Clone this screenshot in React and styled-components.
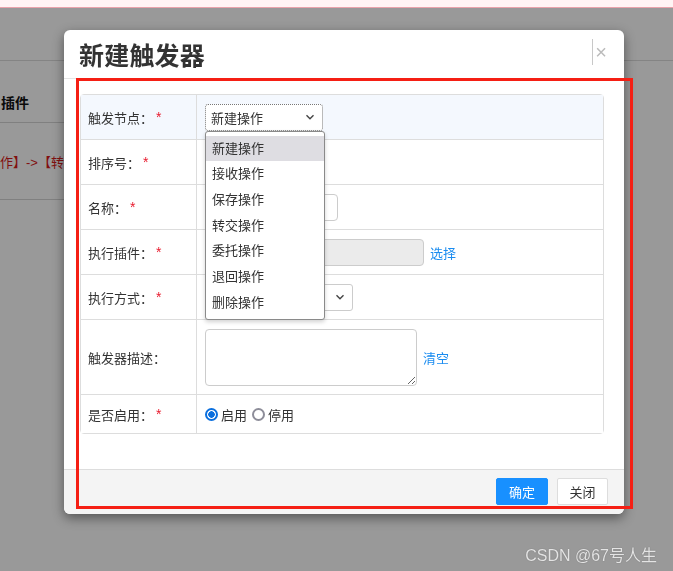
import styled, { createGlobalStyle } from "styled-components"

const GlobalStyle = createGlobalStyle`
  html, body {
    margin: 0;
    padding: 0;
    background: #fff;
    font-family: "Liberation Sans", "Noto Sans CJK SC", sans-serif;
    overflow: hidden;
  }
`

const nodeOptions = ["新建操作", "接收操作", "保存操作", "转交操作", "委托操作", "退回操作", "删除操作"]

function Chevron() {
  return (
    <svg width="10" height="10" viewBox="0 0 10 10">
      <path d="M1.5 3.2 L5 6.7 L8.5 3.2" fill="none" stroke="#444" strokeWidth="1.4" />
    </svg>
  )
}

export default function App() {
  return (
    <>
      <GlobalStyle />
      <Page>
        <TopStrip />
        <BgToolbar />
        <BgTable>
          <BgRow h={62} pb={10}>
            <BgClip>
              <BgCell shift={1} bold>插件</BgCell>
            </BgClip>
          </BgRow>
          <BgRow h={77}>
            <BgClip>
              <BgCell shift={0} red>作】-&gt;【转</BgCell>
            </BgClip>
          </BgRow>
        </BgTable>
      </Page>

      <Overlay />

      <Modal>
        <ModalHeader>
          <Title>新建触发器</Title>
          <CloseButton>×</CloseButton>
        </ModalHeader>

        <ModalBody>
          <FormTable>
            <Row h={44} active>
              <Label>触发节点：<Req>*</Req></Label>
              <Field>
                <SelectBox w={118} focused>
                  <span>新建操作</span>
                  <Chevron />
                  <Dropdown>
                    {nodeOptions.map((o, i) => (
                      <Option key={o} selected={i === 0}>{o}</Option>
                    ))}
                  </Dropdown>
                </SelectBox>
              </Field>
            </Row>
            <Row h={44}>
              <Label>排序号：<Req>*</Req></Label>
              <Field>
                <Input w={100} />
              </Field>
            </Row>
            <Row h={44}>
              <Label>名称：<Req>*</Req></Label>
              <Field>
                <Input w={133} />
              </Field>
            </Row>
            <Row h={44}>
              <Label>执行插件：<Req>*</Req></Label>
              <Field>
                <Input w={219} disabled />
                <Link>选择</Link>
              </Field>
            </Row>
            <Row h={44}>
              <Label>执行方式：<Req>*</Req></Label>
              <Field>
                <SelectBox w={148}>
                  <span></span>
                  <Chevron />
                </SelectBox>
              </Field>
            </Row>
            <Row h={74}>
              <Label>触发器描述：</Label>
              <Field>
                <TextArea />
                <Link>清空</Link>
              </Field>
            </Row>
            <Row h={38} last>
              <Label>是否启用：<Req>*</Req></Label>
              <Field>
                <RadioGroup>
                  <Radio checked />
                  <RadioText>启用</RadioText>
                  <Radio />
                  <RadioText>停用</RadioText>
                </RadioGroup>
              </Field>
            </Row>
          </FormTable>
        </ModalBody>

        <ModalFooter>
          <Button primary>确定</Button>
          <Button>关闭</Button>
        </ModalFooter>
      </Modal>

      <Annotation />
      <Watermark>CSDN @67号人生</Watermark>
    </>
  )
}

const Page = styled.div`
  width: 673px;
  height: 571px;
  background: #fff;
  overflow: hidden;
`
const TopStrip = styled.div`
  height: 7px;
  background: #fff4f4;
  border-bottom: 1px solid #e9a3ab;
  position: relative;
  z-index: 2;
`
const BgToolbar = styled.div`
  height: 52px;
  border-bottom: 1px solid #dcdcdc;
`
const BgTable = styled.div`
  width: 600px;
`
const BgRow = styled.div`
  height: ${(p) => p.h}px;
  box-sizing: border-box;
  padding-bottom: ${(p) => p.pb || 0}px;
  border-bottom: 1px solid #d6d6d6;
  display: flex;
  align-items: ${(p) => (p.pb ? "flex-end" : "center")};
`
const BgClip = styled.div`
  width: 64px;
  overflow: hidden;
`
const BgCell = styled.div`
  margin-left: ${(p) => p.shift}px;
  white-space: nowrap;
  font-size: ${(p) => (p.bold ? 14 : 13)}px;
  font-weight: ${(p) => (p.bold ? 700 : 400)};
  color: ${(p) => (p.red ? "#d81b1b" : "#111")};
`
const Overlay = styled.div`
  position: fixed;
  left: 0;
  right: 0;
  top: 8px;
  bottom: 0;
  background: rgba(0, 0, 0, 0.4);
`
const Modal = styled.div`
  position: absolute;
  left: 64px;
  top: 30px;
  width: 560px;
  height: 484px;
  background: #fff;
  border-radius: 6px;
  box-shadow: 0 4px 12px rgba(0, 0, 0, 0.45);
  display: flex;
  flex-direction: column;
`
const ModalHeader = styled.div`
  height: 49px;
  box-sizing: border-box;
  border-bottom: 1px solid #e5e5e5;
  padding: 0 17px 0 15px;
  display: flex;
  align-items: center;
  justify-content: space-between;
`
const Title = styled.h3`
  margin: 0;
  font-size: 25px;
  font-weight: 700;
  color: #333;
  letter-spacing: 0.2px;
`
const CloseButton = styled.span`
  border-left: 1px solid #c8c8c8;
  height: 26px;
  padding-left: 2px;
  margin-top: -4px;
  font-size: 20px;
  line-height: 26px;
  color: #bbb;
`
const ModalBody = styled.div`
  flex: 1;
  padding: 15px 20px 0 16px;
`
const FormTable = styled.div`
  border: 1px solid #ddd;
  border-radius: 4px;
`
const Row = styled.div`
  display: grid;
  grid-template-columns: 116px 1fr;
  height: ${(p) => p.h + (p.last ? 0 : 1)}px;
  box-sizing: border-box;
  border-bottom: ${(p) => (p.last ? "none" : "1px solid #ddd")};
  background: ${(p) => (p.active ? "#f4f8fe" : "#fff")};
`
const Label = styled.div`
  border-right: 1px solid #ddd;
  padding-left: 7px;
  display: flex;
  align-items: center;
  font-size: 13px;
  color: #333;
`
const Req = styled.span`
  color: #e8192c;
  margin-left: 3px;
  font-size: 14px;
`
const Field = styled.div`
  padding-left: 8px;
  display: flex;
  align-items: center;
`
const SelectBox = styled.div`
  position: relative;
  width: ${(p) => p.w}px;
  height: 27px;
  box-sizing: border-box;
  border: 1px ${(p) => (p.focused ? "dotted #777" : "solid #ccc")};
  border-radius: 3px;
  background: #fff;
  padding: 0 7px 0 5px;
  display: flex;
  align-items: center;
  justify-content: space-between;
  font-size: 13px;
  color: #333;
`
const Dropdown = styled.div`
  position: absolute;
  top: 26px;
  left: -1px;
  width: 120px;
  box-sizing: border-box;
  border: 1px solid #8a8a8a;
  border-radius: 3px;
  background: #fff;
  padding: 4px 0;
  box-shadow: 0 2px 4px rgba(0, 0, 0, 0.18);
  z-index: 5;
`
const Option = styled.div`
  height: 25.7px;
  line-height: 25.7px;
  padding-left: 6px;
  font-size: 13px;
  color: #333;
  background: ${(p) => (p.selected ? "#dedde2" : "transparent")};
`
const Input = styled.input`
  width: ${(p) => p.w}px;
  height: 27px;
  box-sizing: border-box;
  border: 1px solid #ccc;
  border-radius: 4px;
  background: ${(p) => (p.disabled ? "#ebebeb" : "#fff")};
  outline: none;
`
const TextArea = styled.textarea`
  width: 212px;
  height: 57px;
  box-sizing: border-box;
  border: 1px solid #ccc;
  border-radius: 4px;
  margin: 0;
  outline: none;
`
const Link = styled.a`
  margin-left: 6px;
  font-size: 13px;
  color: #1a8cf0;
  cursor: pointer;
`
const RadioGroup = styled.div`
  display: flex;
  align-items: center;
  font-size: 13px;
  color: #333;
`
const Radio = styled.span`
  width: 13px;
  height: 13px;
  box-sizing: border-box;
  border-radius: 50%;
  border: 2px solid ${(p) => (p.checked ? "#0b6fde" : "#8d8d99")};
  background: ${(p) => (p.checked ? "radial-gradient(circle, #0b6fde 0 3px, #fff 3.5px)" : "#fff")};
`
const RadioText = styled.span`
  margin: 0 5px 0 3px;
`
const ModalFooter = styled.div`
  height: 45px;
  box-sizing: border-box;
  border-top: 1px solid #ddd;
  background: #f4f4f4;
  border-radius: 0 0 6px 6px;
  padding: 8px 16px 0 0;
  display: flex;
  justify-content: flex-end;
  align-items: flex-start;
  gap: 9px;
`
const Button = styled.button`
  height: 27px;
  width: ${(p) => (p.primary ? 52 : 51)}px;
  box-sizing: border-box;
  border: 1px solid ${(p) => (p.primary ? "#1890ff" : "#ddd")};
  border-radius: 2px;
  background: ${(p) => (p.primary ? "#1890ff" : "#fff")};
  color: ${(p) => (p.primary ? "#fff" : "#333")};
  font-family: inherit;
  font-size: 13px;
  padding: 0;
`
const Annotation = styled.div`
  position: absolute;
  left: 76px;
  top: 78px;
  width: 557px;
  height: 431px;
  box-sizing: border-box;
  border: 3px solid #f51f14;
  pointer-events: none;
`
const Watermark = styled.div`
  position: absolute;
  right: 16px;
  top: 542px;
  font-size: 16px;
  color: #e4e4e4;
  text-shadow: 0 0 1px rgba(0, 0, 0, 0.4);
`
